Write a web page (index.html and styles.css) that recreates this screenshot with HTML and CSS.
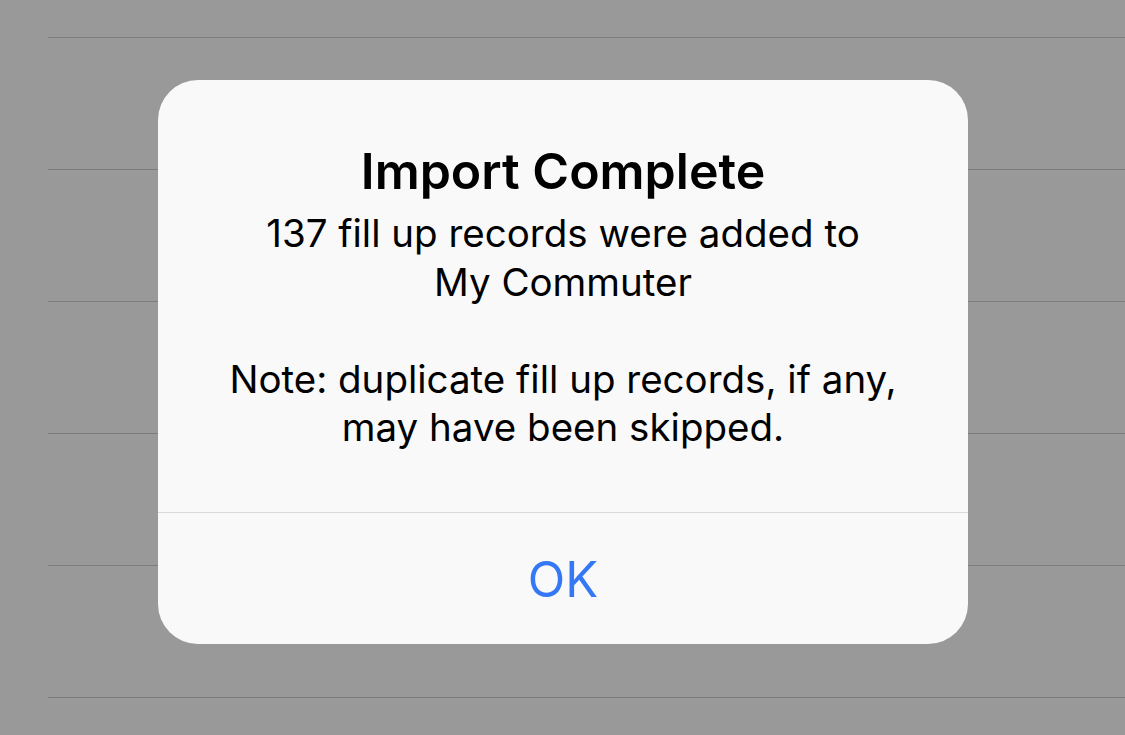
FILE: index.html
```html
<!DOCTYPE html>
<html>
<head>
<meta charset="utf-8">
<link rel="stylesheet" href="styles.css">
</head>
<body>
<div class="table">
  <div class="row first"></div>
  <div class="row"></div>
  <div class="row"></div>
  <div class="row"></div>
  <div class="row"></div>
  <div class="row"></div>
</div>
<div class="alert">
  <div class="content">
    <div class="title">Import Complete</div>
    <div class="message">137 fill up records were added to<br>My Commuter<br><br>Note: duplicate fill up records, if any,<br>may have been skipped.</div>
  </div>
  <div class="actions">
    <div class="button">OK</div>
  </div>
</div>
</body>
</html>
```

FILE: styles.css
```css
html, body {
  margin: 0;
  padding: 0;
  width: 1125px;
  height: 735px;
  overflow: hidden;
  background: #999999;
  font-family: Inter, "Noto Sans", sans-serif;
}
.table {
  display: flex;
  flex-direction: column;
}
.row {
  height: 131px;
  margin-left: 48px;
  border-bottom: 1px solid #7d7d7d;
}
.row.first {
  height: 37px;
}
.alert {
  position: absolute;
  left: 158px;
  top: 80px;
  width: 810px;
  height: 564px;
  background: #f9f9f9;
  border-radius: 40px;
  display: flex;
  flex-direction: column;
  overflow: hidden;
}
.content {
  height: 433px;
  box-sizing: border-box;
  padding: 61px 20px 0;
  text-align: center;
  color: #000;
  border-bottom: 1px solid #d8d8dc;
}
.title {
  font-size: 50px;
  font-weight: 600;
  line-height: 60px;
}
.message {
  margin-top: 8px;
  font-size: 38.5px;
  line-height: 48.5px;
}
.actions {
  flex: 1;
  display: flex;
  align-items: center;
  justify-content: center;
}
.button {
  color: #3478f6;
  font-size: 49px;
  line-height: 60px;
  margin-top: 2px;
}
```
